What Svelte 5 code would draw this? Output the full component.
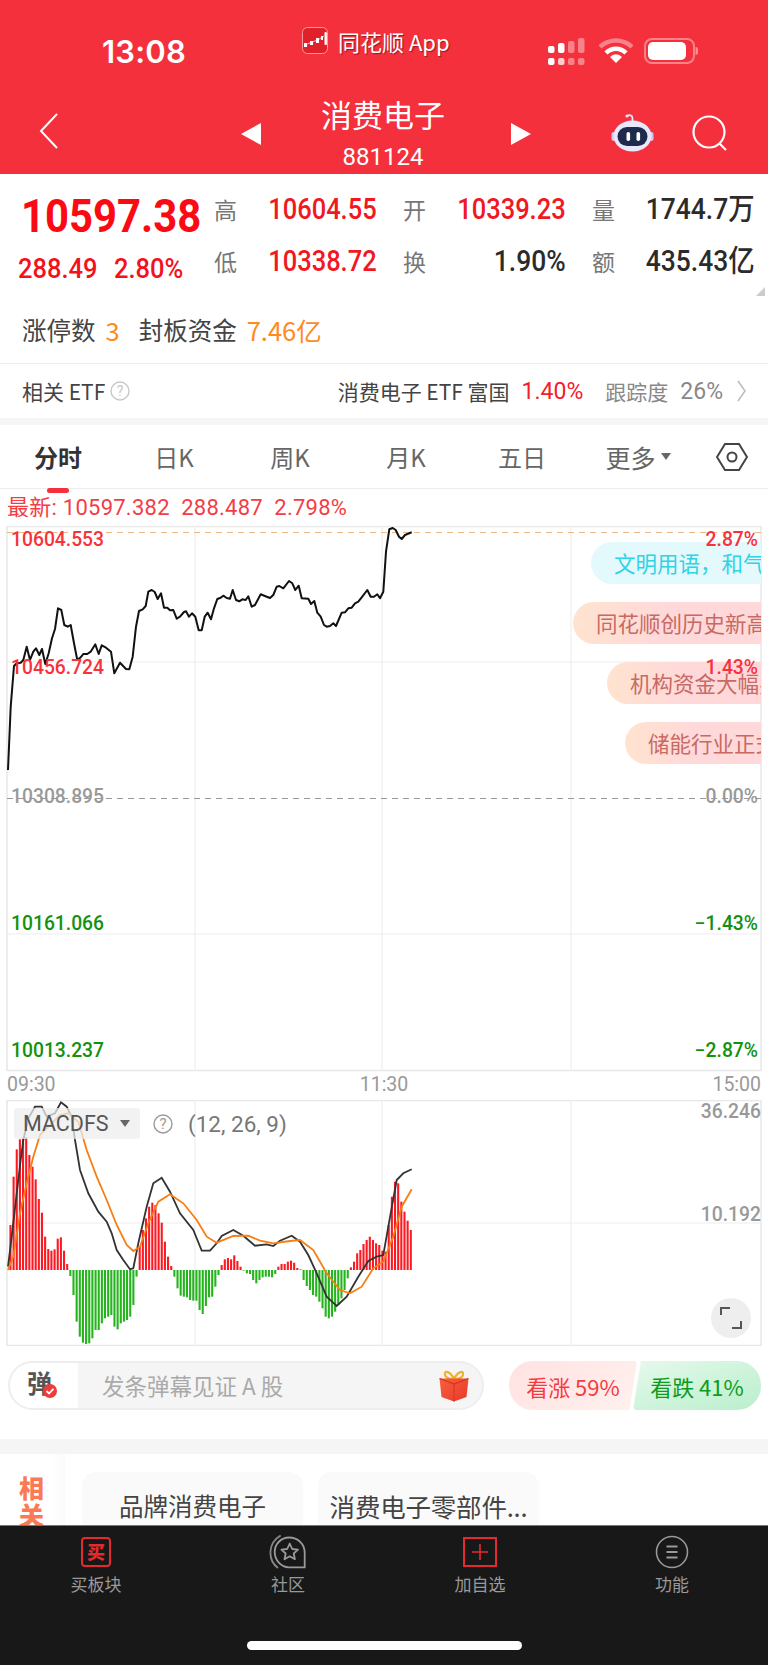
<script>
  const price = [[24,810],[32,620],[42,498],[50,490],[62,488],[70,480],[80,440],[90,480],[100,455],[108,445],[118,465],[126,447],[136,492],[146,460],[156,415],[165,387],[174,325],[184,330],[193,375],[203,380],[212,375],[222,430],[232,480],[242,472],[250,462],[262,462],[272,455],[286,433],[296,462],[305,436],[318,443],[333,455],[343,520],[360,488],[378,507],[388,508],[398,470],[408,380],[417,333],[428,328],[437,318],[445,275],[455,270],[464,276],[473,297],[483,280],[492,323],[502,323],[510,331],[520,330],[530,356],[540,350],[552,336],[558,334],[567,350],[576,340],[586,350],[596,391],[605,391],[614,350],[623,338],[633,358],[642,325],[652,297],[662,293],[670,287],[680,294],[690,296],[698,270],[708,300],[718,304],[727,298],[737,300],[745,289],[755,320],[765,315],[782,283],[800,290],[810,294],[820,285],[830,260],[838,258],[850,265],[867,243],[877,250],[886,270],[896,257],[905,295],[925,296],[933,312],[943,303],[952,338],[962,350],[972,375],[980,380],[990,378],[1000,370],[1008,378],[1025,338],[1035,337],[1045,325],[1055,323],[1065,310],[1075,305],[1085,292],[1102,270],[1112,290],[1122,290],[1132,283],[1140,295],[1150,275],[1158,155],[1168,88],[1178,84],[1187,90],[1197,110],[1205,117],[1215,105],[1235,97]];
  const dif = [[24,620],[35,530],[50,400],[62,300],[70,240],[85,175],[105,140],[125,140],[140,170],[165,160],[183,127],[200,140],[215,170],[225,240],[240,330],[265,400],[295,455],[320,485],[335,520],[350,570],[370,600],[390,628],[400,625],[415,550],[440,440],[460,370],[485,353],[510,395],[540,460],[580,510],[605,572],[630,572],[650,550],[665,528],[700,510],[730,527],[765,557],[800,553],[820,558],[840,542],[875,527],[900,545],[925,585],[950,640],[980,710],[1010,738],[1040,710],[1075,650],[1105,603],[1130,590],[1150,585],[1165,500],[1190,360],[1210,340],[1235,328]];
  const dea = [[24,630],[40,590],[60,460],[80,370],[100,290],[120,225],[150,195],[180,165],[205,160],[235,185],[260,270],[290,350],[320,420],[350,495],[380,555],[400,573],[420,560],[445,490],[475,425],[510,403],[550,430],[590,480],[620,530],[650,548],[700,528],[745,527],[780,542],[820,550],[870,543],[900,540],[940,570],[980,640],[1020,690],[1050,700],[1085,680],[1120,625],[1150,605],[1180,530],[1205,440],[1235,388]];
  const bars = [495,350,268,238,235,232,285,320,358,417,458,530,567,572,568,536,532,572,612,648,705,785,830,848,852,850,835,810,810,790,775,770,765,800,808,790,785,780,770,735,650,560,510,475,440,428,435,460,488,545,590,618,650,685,707,710,712,720,722,722,750,762,738,712,710,680,645,615,598,594,598,586,603,620,632,640,642,660,670,660,652,650,650,652,642,620,612,612,605,602,608,624,628,660,678,690,705,710,725,745,770,775,770,755,735,715,690,655,622,605,580,570,552,540,530,540,550,555,572,575,495,410,365,370,425,455,482,510];

  const line = (pts, oy) => pts.map(([x, y]) => `${(x / 3).toFixed(1)},${(oy + y / 3).toFixed(1)}`).join(' ');
  const zero = 1060 + 630 / 3;
  const step = (1232 - 31) / (bars.length - 1) / 3;
  const macdBars = bars.map((t, i) => {
    const y = 1060 + t / 3;
    return { x: 9.4 + i * step, y: Math.min(y, zero), h: Math.abs(y - zero), up: y < zero };
  });

  const leftLabels = [
    { t: '10604.553', y: 546, c: 'red' },
    { t: '10456.724', y: 674, c: 'red' },
    { t: '10308.895', y: 802.5, c: 'gray' },
    { t: '10161.066', y: 930, c: 'green' },
    { t: '10013.237', y: 1057, c: 'green' }
  ];
  const rightLabels = [
    { t: '2.87%', y: 546, c: 'red' },
    { t: '1.43%', y: 674, c: 'red' },
    { t: '0.00%', y: 802.5, c: 'gray' },
    { t: '−1.43%', y: 930, c: 'green' },
    { t: '−2.87%', y: 1057, c: 'green' }
  ];
  const danmaku = [
    { t: '文明用语，和气生财', x: 591, y: 16, kind: 'cyan' },
    { t: '同花顺创历史新高', x: 573, y: 76, kind: 'warm' },
    { t: '机构资金大幅买入', x: 607, y: 136, kind: 'warm' },
    { t: '储能行业正式崛起', x: 625, y: 196, kind: 'warm' }
  ];
  const stats = [
    { l: '高', v: '10604.55', red: true },
    { l: '开', v: '10339.23', red: true },
    { l: '量', v: '1744.7万' },
    { l: '低', v: '10338.72', red: true },
    { l: '换', v: '1.90%' },
    { l: '额', v: '435.43亿' }
  ];
  const tabs = ['分时', '日K', '周K', '月K', '五日'];
</script>

<div class="page">
  <header class="head">
    <div class="status">
      <span class="time">13:08</span>
      <div class="app">
        <svg width="26" height="27" viewBox="0 0 26 27">
          <rect x="0.5" y="0.5" width="25" height="26" rx="5" fill="#e0202a" stroke="#f79a9f" />
          <path d="M3 18 L10 15 L16 13 L22 9" fill="none" stroke="#fff" stroke-width=".7" />
          <path d="M2 16h3v4H2zM8 14h3v4H8zM14 11h3v5h-3zM19 9h2v4h-2z" fill="#fff" />
          <rect x="22.5" y="5" width="2.4" height="13" rx="1" fill="#fff" />
        </svg>
        <span>同花顺 App</span>
      </div>
      <div class="sys">
        <svg width="40" height="28" viewBox="0 0 40 28">
          <g fill="#fff">
            <rect x="0" y="8" width="6.5" height="7" rx="2" />
            <rect x="10" y="5" width="6.5" height="10" rx="2" />
            <rect x="0" y="20" width="6.5" height="7" rx="2" />
            <rect x="10" y="20" width="6.5" height="7" rx="2" fill-opacity=".75" />
          </g>
          <g fill="#fff" fill-opacity=".4">
            <rect x="20" y="3" width="6.5" height="12" rx="2" />
            <rect x="30" y="0" width="6.5" height="15" rx="2" />
            <rect x="20" y="20" width="6.5" height="7" rx="2" />
            <rect x="30" y="20" width="6.5" height="7" rx="2" />
          </g>
        </svg>
        <svg width="34" height="25" viewBox="0 0 34 25">
          <path d="M1 9 A23 23 0 0 1 33 9" fill="none" stroke="#fff" stroke-opacity=".4" stroke-width="4.5" />
          <path d="M7 15 A14 14 0 0 1 27 15" fill="none" stroke="#fff" stroke-width="4.5" />
          <path d="M11 19 A8 8 0 0 1 23 19 L17 25 Z" fill="#fff" />
        </svg>
        <svg width="54" height="26" viewBox="0 0 54 26">
          <rect x="1" y="1" width="49" height="24" rx="7" fill="none" stroke="#fff" stroke-opacity=".4" stroke-width="2" />
          <rect x="4" y="4" width="38" height="18" rx="5" fill="#fff" />
          <path d="M51.5 9 a3 4 0 0 1 0 8z" fill="#fff" fill-opacity=".45" />
        </svg>
      </div>
    </div>
    <div class="nav">
      <svg class="back" width="20" height="36" viewBox="0 0 20 36"><path d="M18 1 L2 18 L18 35" fill="none" stroke="#fff" stroke-width="2" /></svg>
      <div class="title">
        <i class="tri left"></i>
        <div class="names">
          <div class="name">消费电子</div>
          <div class="code">881124</div>
        </div>
        <i class="tri right"></i>
      </div>
      <div class="actions">
        <svg width="44" height="40" viewBox="0 0 44 40">
          <path d="M21.5 9 V5 a3 3 0 0 0 -5 -2" fill="none" stroke="#e8e6fa" stroke-width="1.8" />
          <circle cx="16" cy="3" r="1.6" fill="#e8e6fa" />
          <rect x="0.5" y="19" width="4" height="9" rx="2" fill="#cfc6f0" />
          <rect x="38.5" y="19" width="4" height="9" rx="2" fill="#cfc6f0" />
          <ellipse cx="21.5" cy="23" rx="19" ry="15.5" fill="#e9e7fa" />
          <rect x="6.5" y="14" width="30" height="19" rx="9.5" fill="#1e2b4d" />
          <rect x="15.5" y="19" width="3.6" height="9" rx="1.8" fill="#fff" />
          <rect x="25.5" y="19" width="3.6" height="9" rx="1.8" fill="#fff" />
        </svg>
        <svg width="36" height="36" viewBox="0 0 36 36"><circle cx="17" cy="17" r="15.5" fill="none" stroke="#fff" stroke-width="2.2" /><path d="M27 28 L34 35" stroke="#fff" stroke-width="2.2" /></svg>
      </div>
    </div>
  </header>

  <section class="quote">
    <div class="main-price">
      <div class="big">10597.38</div>
      <div class="chg"><span>288.49</span><span>2.80%</span></div>
    </div>
    <div class="stats">
      {#each stats as s}
        <div class="stat">
          <span class="lab">{s.l}</span>
          <span class="val" class:red={s.red}>{s.v}</span>
        </div>
      {/each}
    </div>
    <i class="corner"></i>
  </section>

  <div class="limit">
    <span>涨停数</span><b class="cnt">3</b><span class="fund">封板资金</span><b>7.46亿</b>
  </div>

  <div class="etf">
    <span>相关 ETF</span>
    <svg class="help" width="20" height="20" viewBox="0 0 20 20"><circle cx="10" cy="10" r="9" fill="none" stroke="#c8c8c8" stroke-width="1.4" /><text x="10" y="14.5" text-anchor="middle" class="qm">?</text></svg>
    <span class="etf-name">消费电子 ETF 富国</span>
    <span class="etf-pct">1.40%</span>
    <span class="etf-track">跟踪度</span>
    <span class="etf-track num">26%</span>
    <svg class="chev" width="9" height="22" viewBox="0 0 9 22"><path d="M1 1 L8 11 L1 21" fill="none" stroke="#bbb" stroke-width="1.5" /></svg>
  </div>

  <div class="band small"></div>

  <nav class="tabs">
    {#each tabs as t, i}
      <span class="tab" class:on={i === 0}>{t}</span>
    {/each}
    <span class="tab more">更多<i></i></span>
    <svg class="gear" width="32" height="28" viewBox="0 0 32 28"><path d="M9 1 H23 L31 14 L23 27 H9 L1 14 Z" fill="none" stroke="#444" stroke-width="2" /><circle cx="16" cy="14" r="4.5" fill="none" stroke="#444" stroke-width="2" /></svg>
  </nav>

  <div class="latest">最新: 10597.382&nbsp; 288.487&nbsp; 2.798%</div>

  <div class="chart">
    <svg class="layer" width="768" height="546" viewBox="0 526 768 546">
      <rect x="7" y="526.5" width="754" height="544" fill="none" stroke="#e8e8e8" stroke-width="1.5" />
      <path d="M7 662H761M7 934H761M195 526V1071M382 526V1071M571 526V1071" stroke="#eee" stroke-width="1.2" fill="none" />
      <path d="M7 532.5H761" stroke="#ecb98a" stroke-dasharray="6 5" stroke-width="1.2" />
      <path d="M7 798.5H761" stroke="#999" stroke-dasharray="6 5" stroke-width="1.2" />
      <polyline points={line(price, 500)} fill="none" stroke="#111" stroke-width="2" stroke-linejoin="round" />
    </svg>
    {#each danmaku as d}
      <div class="pill {d.kind}" style="left:{d.x}px;top:{d.y}px">{d.t}</div>
    {/each}
    <svg class="layer" width="768" height="546" viewBox="0 526 768 546">
      {#each leftLabels as l}
        <text x="11" y={l.y} class="lbl {l.c}">{l.t}</text>
      {/each}
      {#each rightLabels as l}
        <text x="758" y={l.y} text-anchor="end" class="lbl {l.c}">{l.t}</text>
      {/each}
    </svg>
  </div>

  <div class="axis"><span>09:30</span><span class="mid">11:30</span><span>15:00</span></div>

  <div class="macd">
    <svg class="layer" width="768" height="246" viewBox="0 1100 768 246">
      <rect x="7" y="1100.5" width="754" height="245" fill="none" stroke="#e8e8e8" stroke-width="1.5" />
      <path d="M7 1223H761M195 1100V1345M382 1100V1345M571 1100V1345" stroke="#eee" stroke-width="1.2" fill="none" />
      {#each macdBars as b}
        <rect x={b.x} y={b.y} width="2.1" height={b.h} fill={b.up ? '#fb1a22' : '#25b41e'} />
      {/each}
      <polyline points={line(dif, 1060)} fill="none" stroke="#333" stroke-width="1.8" />
      <polyline points={line(dea, 1060)} fill="none" stroke="#f87d12" stroke-width="1.8" />
      <text x="761" y="1118" text-anchor="end" class="lbl gray">36.246</text>
      <text x="761" y="1221" text-anchor="end" class="lbl gray">10.192</text>
    </svg>
    <div class="macd-head">
      <div class="macd-sel">MACDFS<i></i></div>
      <svg width="20" height="20" viewBox="0 0 20 20"><circle cx="10" cy="10" r="9" fill="none" stroke="#999" stroke-width="1.4" /><text x="10" y="15" text-anchor="middle" class="qm dark">?</text></svg>
      <span class="params">(12, 26, 9)</span>
    </div>
    <div class="expand">
      <svg width="22" height="22" viewBox="0 0 22 22"><path d="M1 8 V1 H10 M21 14 V21 H12" fill="none" stroke="#555" stroke-width="2" /></svg>
    </div>
  </div>

  <div class="actions-row">
    <div class="input">
      <div class="dan">弹<i><svg width="12" height="12" viewBox="0 0 12 12"><path d="M2.5 6 L5 8.5 L9.5 3.8" fill="none" stroke="#fff" stroke-width="1.8" /></svg></i></div>
      <div class="ph">发条弹幕见证 A 股</div>
      <svg width="30" height="32" viewBox="0 0 30 32">
        <defs>
          <linearGradient id="giftSide" x1="0" y1="0" x2="1" y2="1">
            <stop offset="0" stop-color="#f7613f" />
            <stop offset="1" stop-color="#e9372a" />
          </linearGradient>
        </defs>
        <path d="M15 9 C11 1 5 0 6 5 C6.6 8 11 9 15 9 C19 9 23.4 8 24 5 C25 0 19 1 15 9Z" fill="none" stroke="#f0b02f" stroke-width="2.2" />
        <path d="M0.5 8.5 H29.5 L27.5 27 L15 31.5 L2.5 27 Z" fill="url(#giftSide)" />
        <path d="M0.5 8.5 L15 14 L29.5 8.5" fill="none" stroke="#d5341f" stroke-width="1.3" />
        <path d="M15 14 V31.5" stroke="#d8391f" stroke-width="1.2" />
      </svg>
    </div>
    <div class="vote">
      <div class="up">看涨 59%</div>
      <div class="down">看跌 41%</div>
    </div>
  </div>

  <div class="band"></div>

  <div class="related">
    <div class="rel-tag">相<br />关</div>
    <div class="rel-card">品牌消费电子</div>
    <div class="rel-card wide">消费电子零部件...</div>
  </div>

  <footer class="bottom">
    <div class="bt">
      <svg width="32" height="32" viewBox="0 0 32 32"><rect x="2" y="2" width="28" height="28" rx="3" fill="none" stroke="#e22a2f" stroke-width="2" /><text x="16" y="22.5" text-anchor="middle" class="buy">买</text></svg>
      <span>买板块</span>
    </div>
    <div class="bt">
      <svg width="38" height="34" viewBox="0 0 38 34">
        <path d="M11.7 .5 C-1.5 8 -1.5 25 9 33" fill="none" stroke="#888" stroke-width="1.8" />
        <path d="M20 2.5 C29 2.5 35.7 9 35.7 18 V32.3 H20 C12 32.3 5.7 25 5.7 17 C5.7 9 12 2.5 20 2.5Z" fill="none" stroke="#999" stroke-width="1.8" />
        <path d="M20.7 8.5 L23.2 14 L29 14.6 L24.7 18.5 L25.9 24.2 L20.7 21.3 L15.5 24.2 L16.7 18.5 L12.4 14.6 L18.2 14Z" fill="none" stroke="#999" stroke-width="1.8" stroke-linejoin="round" />
      </svg>
      <span>社区</span>
    </div>
    <div class="bt">
      <svg width="34" height="32" viewBox="0 0 34 32"><rect x="1" y="2" width="32" height="28" fill="none" stroke="#e22a2f" stroke-width="2" /><path d="M17 8 V24 M9 16 H25" stroke="#e22a2f" stroke-width="1.6" /></svg>
      <span>加自选</span>
    </div>
    <div class="bt">
      <svg width="34" height="34" viewBox="0 0 34 34"><circle cx="17" cy="17" r="15.5" fill="none" stroke="#999" stroke-width="1.6" /><path d="M11.5 11.5 H22.5 M11.5 17 H22.5 M11.5 22.5 H22.5" stroke="#999" stroke-width="1.8" /></svg>
      <span>功能</span>
    </div>
    <i class="home"></i>
  </footer>
</div>

<style>
  :global(body) { margin: 0; background: #fff; }
  .page {
    width: 768px; height: 1665px; overflow: hidden; position: relative;
    font-family: "Noto Sans CJK SC", sans-serif;
    color: #333;
  }

  .head { background: #f3303b; height: 174px; color: #fff; }
  .status { height: 88px; display: flex; padding-left: 102px; padding-right: 68px; box-sizing: border-box; }
  .time { font: 600 31px Inter, sans-serif; margin-top: 33px; width: 84px; letter-spacing: .2px; white-space: nowrap; }
  .app { display: flex; align-items: center; gap: 10px; margin: 27px 0 0 116px; height: 27px; font-size: 22px; text-shadow: 1px 1px 1px rgba(90,0,0,.55); }
  .sys { margin-left: auto; margin-top: 38px; display: flex; align-items: flex-start; gap: 11px; transform: translateX(-2px); }
  .nav { height: 86px; display: grid; grid-template-columns: 241px 290px 1fr; align-items: center; }
  .back { margin-left: 39px; }
  .title { display: flex; align-items: flex-start; justify-content: space-between; }
  .tri { width: 0; height: 0; border-top: 11px solid transparent; border-bottom: 11px solid transparent; margin-top: 31px; }
  .tri.left { border-right: 20px solid #fff; }
  .tri.right { border-left: 20px solid #fff; }
  .names { text-align: center; margin-left: -6px; }
  .name { font-size: 31px; line-height: 44px; }
  .code { font: 400 24px/28px Roboto, sans-serif; margin-top: 7px; }
  .actions { display: flex; justify-content: flex-end; align-items: center; gap: 37px; padding-right: 40px; margin-top: 3px; }

  .quote { display: flex; position: relative; box-sizing: border-box; height: 104px; padding-top: 9px; }
  .main-price { width: 214px; flex: none; }
  .big { font: 700 46px/56px Roboto, sans-serif; color: #fb0a14; margin-left: 21px; margin-top: 5px; transform: scaleX(.91); transform-origin: left; white-space: nowrap; }
  .chg { display: flex; margin-left: 18px; margin-top: 10px; font: 500 28px/30px Roboto, sans-serif; color: #f4111c; }
  .chg span { transform: scaleX(.91); transform-origin: left; display: block; white-space: nowrap; }
  .chg span:first-child { width: 96px; flex: none; }
  .stats { display: grid; grid-template-columns: repeat(3, 163px); grid-auto-rows: 52px; column-gap: 26px; }
  .stat { display: flex; justify-content: space-between; align-items: center; }
  .lab { font-size: 23px; color: #777; }
  .val { font: 500 30px/1 Roboto, "Noto Sans CJK SC", sans-serif; color: #2b2b2b; transform: scaleX(.88); transform-origin: right; white-space: nowrap; }
  .val.red { color: #f01822; transform: scaleX(.85); }
  .corner { position: absolute; right: 3px; bottom: -18px; border-left: 9px solid transparent; border-bottom: 9px solid #ccc; }

  .limit { height: 86px; display: flex; align-items: center; padding: 18px 0 0 22px; font-size: 24.5px; border-bottom: 1.5px solid #ececec; box-sizing: border-box; color: #444; }
  .limit b { color: #ff8a1f; font-weight: 400; margin-left: 10px; font-size: 25.5px; }
  .limit .cnt { margin-left: 10px; }
  .fund { margin-left: 19px; }
  .etf { height: 54px; display: flex; align-items: center; padding-left: 22px; font-size: 21px; color: #444; box-sizing: border-box; }
  .help { margin-left: 5px; }
  .qm { font: 400 14px Roboto, sans-serif; fill: #c8c8c8; }
  .qm.dark { font-size: 15px; fill: #999; }
  .etf-name { margin-left: auto; }
  .etf-pct { color: #f3202c; margin-left: 12px; font: 400 23px Roboto, sans-serif; }
  .etf-track { color: #888; margin-left: 22px; }
  .etf-track.num { margin-left: 12px; font: 400 23px Roboto, sans-serif; }
  .chev { margin-left: 14px; margin-right: 22px; }

  .band { height: 15px; background: #f5f5f5; }
  .band.small { height: 7px; }

  .tabs { height: 64px; display: flex; align-items: center; border-bottom: 1.5px solid #ececec; box-sizing: border-box; position: relative; font-size: 24px; }
  .tab { color: #666; width: 116px; text-align: center; flex: none; }
  .tab.on { color: #333; font-weight: 700; position: relative; }
  .tab.on::after { content: ""; position: absolute; left: 47px; bottom: -19px; width: 22px; height: 5px; border-radius: 3px; background: #f3303b; }
  .more { display: flex; align-items: center; justify-content: center; gap: 5px; font-size: 25px; }
  .more i { border-left: 5px solid transparent; border-right: 5px solid transparent; border-top: 7px solid #666; }
  .gear { margin-left: auto; margin-right: 20px; }

  .latest { height: 37px; box-sizing: border-box; padding: 6px 0 0 7px; font: 400 22px/26px Roboto, "Noto Sans CJK SC", sans-serif; color: #f33d45; white-space: nowrap; letter-spacing: .25px; }

  .chart { height: 546px; position: relative; overflow: hidden; }
  .layer { position: absolute; left: 0; top: 0; }
  .pill { position: absolute; right: 7px; height: 42px; line-height: 42px; border-radius: 21px 0 0 21px; padding-left: 23px; font-size: 21.5px; white-space: nowrap; overflow: hidden; }
  .pill.cyan { background: #e4f9fc; color: #2fd3e6; }
  .pill.warm { background: linear-gradient(90deg, #ffe3cf, #ffd9da 50%); color: #c76a64; }
  .lbl { font: 500 19.3px Roboto, sans-serif; }
  .lbl.red { fill: #f6323b; }
  .lbl.gray { fill: #999; }
  .lbl.green { fill: #12920f; }

  .axis { height: 28px; display: flex; justify-content: space-between; padding: 0 7px 3px; box-sizing: border-box; align-items: center; font: 400 19.5px Roboto, sans-serif; color: #999; }

  .macd { height: 246px; position: relative; }
  .macd-head { position: absolute; left: 14px; top: 8px; display: flex; align-items: center; gap: 13px; }
  .macd-sel { width: 126px; height: 31px; box-sizing: border-box; background: rgba(238,238,238,.75); border-radius: 3px; padding-left: 9px; font: 400 21.5px/31px Roboto, sans-serif; color: #555; display: flex; align-items: center; gap: 11px; }
  .macd-sel i { border-left: 5.5px solid transparent; border-right: 5.5px solid transparent; border-top: 7px solid #666; }
  .params { font: 400 22.5px Roboto, sans-serif; color: #777; margin-left: 2px; }
  .expand { position: absolute; left: 711px; top: 198px; width: 40px; height: 40px; border-radius: 50%; background: #eee; display: flex; align-items: center; justify-content: center; }

  .actions-row { height: 93px; display: flex; box-sizing: border-box; padding: 15px 7px 0 8px; justify-content: space-between; }
  .input { width: 476px; height: 49px; box-sizing: border-box; border: 2px solid #eee; border-radius: 25px; background: linear-gradient(90deg, #fff 68px, #f5f5f5 68px); display: flex; align-items: center; padding-right: 13px; overflow: hidden; }
  .dan { width: 68px; flex: none; padding-left: 17px; font-size: 25px; line-height: 30px; font-weight: 700; color: #555; position: relative; box-sizing: border-box; margin-top: -8px; }
  .dan i { position: absolute; left: 33px; top: 17px; width: 14px; height: 14px; background: #ee3b3b; border-radius: 50%; display: flex; align-items: center; justify-content: center; }
  .ph { flex: 1; margin-left: 24px; font-size: 22.5px; color: #aaa; margin-top: -2px; }
  .vote { width: 252px; height: 49px; display: flex; font-size: 22px; white-space: nowrap; }
  .up, .down { flex: none; width: 128px; display: flex; align-items: center; justify-content: center; box-sizing: border-box; }
  .up { background: linear-gradient(135deg, #ffe2e2, #fff1ee); color: #f8393f; border-radius: 24px 4px 4px 24px; clip-path: polygon(0 0, 100% 0, 94% 100%, 0 100%); }
  .down { background: linear-gradient(160deg, #e6f9ec, #b9efcc); color: #0d9c1c; border-radius: 4px 24px 24px 4px; margin-left: -4px; clip-path: polygon(6.25% 0, 100% 0, 100% 100%, 0 100%); }

  .related { height: 71px; display: flex; overflow: hidden; }
  .rel-tag { width: 65px; flex: none; box-sizing: border-box; padding: 20px 0 0 19px; background: linear-gradient(90deg, #fff 80%, #fafafa); font-size: 25px; font-weight: 900; line-height: 27px; color: #fb7a55; margin-right: 17px; }
  .rel-card { width: 221px; height: 100px; margin: 18px 15px 0 0; background: #fafafa; border-radius: 14px; text-align: center; font-size: 24.5px; line-height: 68px; color: #444; flex: none; white-space: nowrap; }
  .rel-card.wide { font-size: 25.5px; letter-spacing: -.2px; }

  .bottom { height: 140px; background: #181818; border-top: 1.5px solid #777; box-sizing: border-box; display: flex; position: relative; }
  .bt { width: 192px; display: flex; flex-direction: column; align-items: center; padding-top: 9px; height: 70px; }
  .bt svg { height: 34px; }
  .bt span { font-size: 17px; line-height: 22px; color: #999; margin-top: 4px; }
  .buy { font-size: 18px; font-weight: 900; fill: #e22a2f; }
  .home { position: absolute; left: 247px; top: 115px; width: 275px; height: 9px; border-radius: 5px; background: #fff; }
</style>
